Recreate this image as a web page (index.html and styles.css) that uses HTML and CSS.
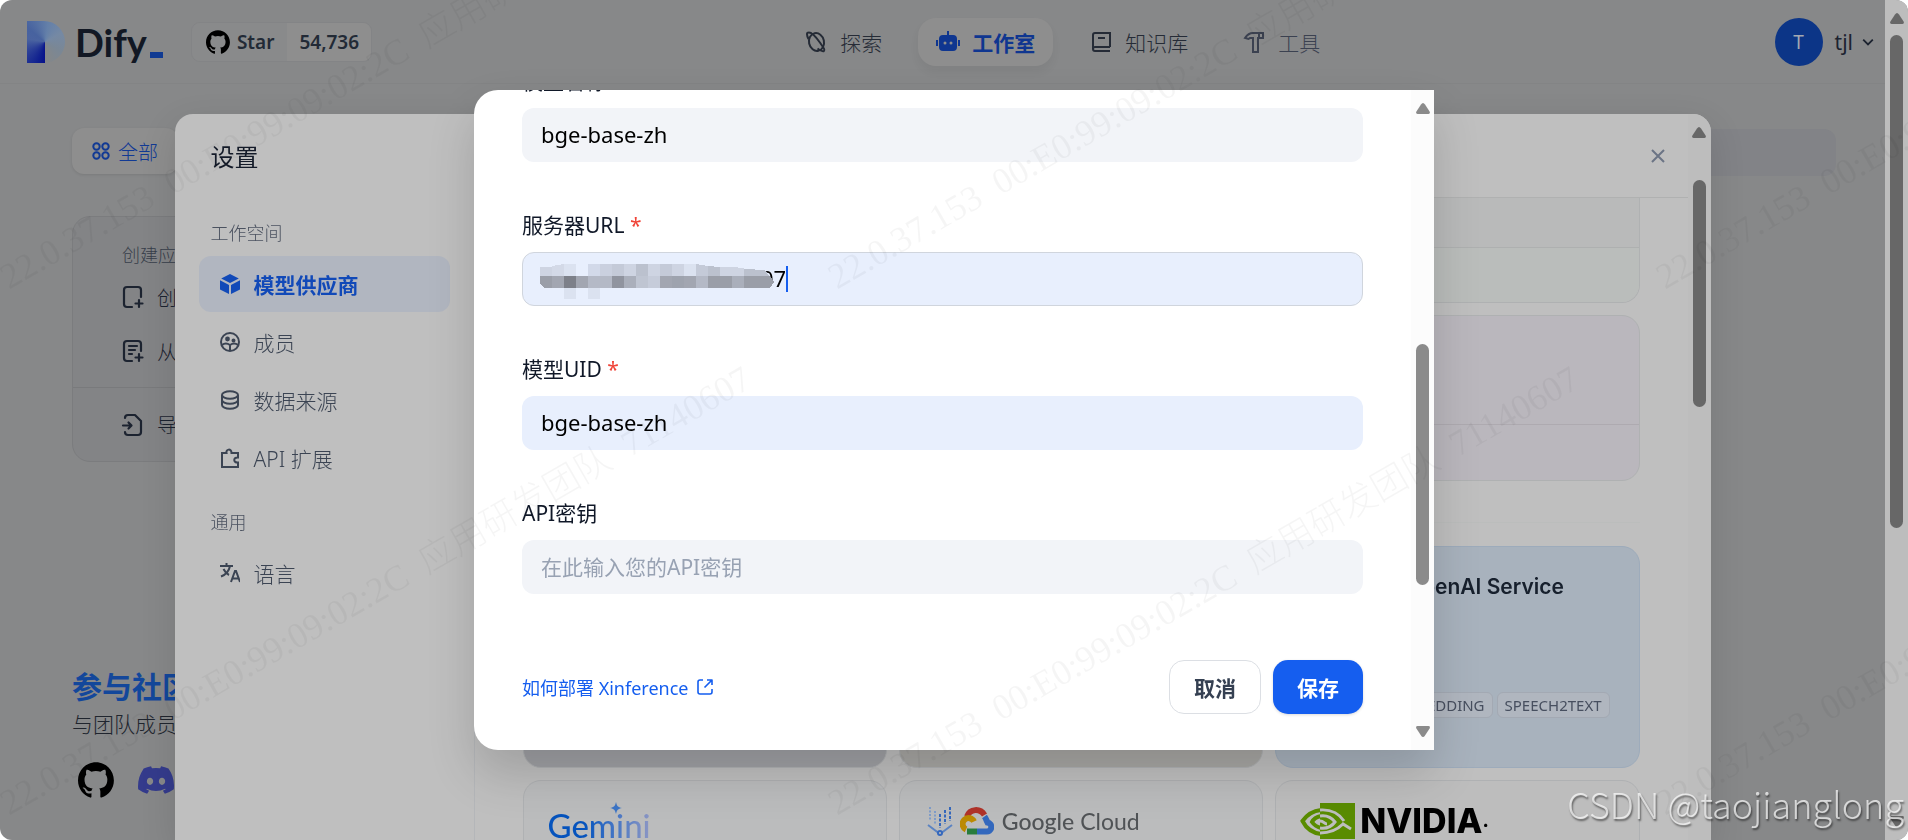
FILE: index.html
```html
<!DOCTYPE html>
<html lang="zh-CN">
<head>
<meta charset="utf-8">
<meta name="viewport" content="width=device-width, initial-scale=1">
<title>Dify</title>
<link rel="stylesheet" href="styles.css">
</head>
<body>
<svg class="defs" aria-hidden="true">
  <defs>
    <symbol id="github" viewBox="0 0 98 96"><path fill-rule="evenodd" d="M48.9 0C21.8 0 0 22 0 49.2 0 71 14 89.400 33.400 95.900c2.400.5 3.300-1.100 3.300-2.400 0-1.100-.1-5.100-.1-9.200-13.600 2.900-16.400-5.900-16.400-5.900-2.200-5.700-5.400-7.200-5.400-7.200-4.500-3 .3-3 .3-3 4.900.3 7.500 5.100 7.500 5.100 4.400 7.500 11.400 5.400 14.200 4.100.4-3.200 1.700-5.400 3.100-6.600-10.800-1.100-22.200-5.400-22.200-24.300 0-5.400 2-9.800 5-13.200-.5-1.200-2.200-6.300.5-13 0 0 4.100-1.300 13.400 5a46.900 46.900 0 0 1 24.400 0c9.300-6.300 13.400-5 13.400-5 2.700 6.700 1 11.800.5 13 3.200 3.400 5 7.800 5 13.200 0 18.900-11.400 23.100-22.300 24.300 1.800 1.500 3.300 4.500 3.300 9.100 0 6.600-.1 11.900-.1 13.500 0 1.300.9 2.900 3.300 2.400C83.600 89.400 97.700 71 97.700 49.200 97.700 22 75.800 0 48.900 0z"/></symbol>
    <symbol id="up" viewBox="0 0 14 11"><path d="M7 0Q8 0 9 1.500L13.600 8.500Q14.600 11 12.500 11H1.500Q-.6 11 .4 8.500L5 1.500Q6 0 7 0z"/></symbol>
    <symbol id="down" viewBox="0 0 14 11"><path d="M7 11Q8 11 9 9.500L13.600 2.500Q14.600 0 12.500 0H1.500Q-.6 0 .4 2.500L5 9.500Q6 11 7 11z"/></symbol>
  </defs>
</svg>

<div class="app">
  <div class="page">
    <header class="topbar">
      <div class="brand">
        <a class="logo" href="#" aria-label="Dify">
          <span class="logo-mark"></span><span class="logo-text">Dify</span><span class="logo-dash"></span>
        </a>
        <a class="star" href="#"><span class="star-label"><svg class="i24"><use href="#github"/></svg>Star</span><span class="star-count">54,736</span></a>
      </div>
      <nav class="nav">
        <a href="#"><svg class="i24" viewBox="0 0 24 24" fill="none" stroke="currentColor" stroke-width="2"><ellipse cx="12.500" cy="12" rx="7.500" ry="9" transform="rotate(-12 12.500 12)"/><path d="M4.500 9C2.500 5 2.500 2.500 4.500 2.500c3-.3 7.500 4.500 11 9.500S21.500 20 20 21c-1.500.8-4-.5-6.500-2.500"/></svg>探索</a>
        <a class="active" href="#"><svg class="i24" viewBox="0 0 24 24" fill="currentColor"><path fill-rule="evenodd" d="M11 1h2v4h4a4 4 0 0 1 4 4v8a4 4 0 0 1-4 4H7a4 4 0 0 1-4-4V9a4 4 0 0 1 4-4h4zM9 11.500a1.500 1.500 0 1 0 0 3 1.500 1.500 0 0 0 0-3zm6 0a1.500 1.500 0 1 0 0 3 1.500 1.500 0 0 0 0-3zM0 10h2v6H0zm22 0h2v6h-2z"/></svg>工作室</a>
        <a href="#"><svg class="i24" viewBox="0 0 24 24" fill="none" stroke="currentColor" stroke-width="2"><path d="M21 17V3H6a2 2 0 0 0-2 2v14a2 2 0 0 0 2 2h15M4 19a2 2 0 0 1 2-2h15M9 8h7"/></svg>知识库</a>
        <a class="soft" href="#"><svg class="i24" viewBox="0 0 24 24" fill="none" stroke="currentColor" stroke-width="2"><path d="M3 8C5 5 8 3 11 3h10v5h-5v14h-5V8H8L6.500 9zM17 3v5"/></svg>工具</a>
      </nav>
      <button class="account" type="button"><span class="avatar">T</span>tjl<svg class="i10" viewBox="0 0 10 10" fill="none" stroke="currentColor" stroke-width="1.500"><path d="M1 3l4 4 4-4"/></svg></button>
    </header>

    <div class="filters">
      <button class="filter" type="button"><svg class="i18" viewBox="0 0 18 18" fill="none" stroke="currentColor" stroke-width="2"><circle cx="4.500" cy="4.500" r="3.200"/><circle cx="13.500" cy="4.500" r="3.200"/><circle cx="4.500" cy="13.500" r="3.200"/><circle cx="13.500" cy="13.500" r="3.200"/></svg>全部</button>
      <input class="search" type="search" aria-label="搜索">
    </div>

    <section class="create">
      <h2>创建应用</h2>
      <a href="#"><svg class="i24" viewBox="0 0 24 24" fill="none" stroke="currentColor" stroke-width="2.200" stroke-linecap="round"><path d="M20 12V5a3 3 0 0 0-3-3H6a3 3 0 0 0-3 3v14a3 3 0 0 0 3 3h5M18 15v7M14.500 18.500h7"/></svg>创建空白应用</a>
      <a href="#"><svg class="i24" viewBox="0 0 24 24" fill="none" stroke="currentColor" stroke-width="2.200" stroke-linecap="round"><path d="M20 12V5a3 3 0 0 0-3-3H6a3 3 0 0 0-3 3v14a3 3 0 0 0 3 3h5M18 15v7M14.500 18.500h7M8 7h8M8 11h6M8 15h3"/></svg>从应用模板创建</a>
      <a class="import" href="#"><svg class="i24" viewBox="0 0 24 24" fill="none" stroke="currentColor" stroke-width="2.200" stroke-linecap="round" stroke-linejoin="round"><path d="M4 5a3 3 0 0 1 3-3h7l6 6v11a3 3 0 0 1-3 3H7a3 3 0 0 1-3-3M2 12.500h8M7.500 9.500l3 3-3 3"/></svg>导入 DSL 文件</a>
    </section>

    <footer class="community">
      <h2>参与社区</h2>
      <p>与团队成员、贡献者和开发者在不同频道中交流</p>
      <div class="social">
        <a href="#" aria-label="GitHub"><svg class="i36"><use href="#github"/></svg></a>
        <a class="discord" href="#" aria-label="Discord"><svg class="i36" viewBox="0 0 24 24"><path fill="currentColor" d="M20.300 4.400A19.800 19.800 0 0 0 15.400 2.900l-.6 1.300a18.300 18.300 0 0 0-5.500 0l-.6-1.300c-1.700.3-3.400.8-4.900 1.500C.6 9 -.3 13.600.1 18.100a20 20 0 0 0 6 3l1.300-2a13 13 0 0 1-1.900-.9l.4-.3a14.200 14.200 0 0 0 12.200 0l.4.3c-.6.4-1.300.7-1.900.9l1.300 2a19.900 19.900 0 0 0 6-3c.5-5.200-.8-9.700-3.600-13.700zM8 15.300c-1.200 0-2.100-1.100-2.100-2.400S6.800 10.500 8 10.500s2.200 1.100 2.100 2.400c0 1.300-.9 2.400-2.100 2.400zm8 0c-1.200 0-2.100-1.100-2.100-2.400s.9-2.400 2.100-2.400 2.200 1.100 2.100 2.400c0 1.300-.9 2.400-2.100 2.400z"/></svg></a>
      </div>
    </footer>
  </div>
  <div class="bar bar-page"><svg class="arrow"><use href="#up"/></svg><div class="track"><div class="thumb"></div></div><svg class="arrow"><use href="#down"/></svg></div>
</div>

<div class="layer layer-settings">
  <section class="settings" role="dialog" aria-label="设置">
    <aside class="side">
      <h1>设置</h1>
      <h2>工作空间</h2>
      <ul>
        <li><a class="on" href="#"><svg class="i20" viewBox="0 0 20 20" fill="currentColor"><path d="M10 0l8.800 4.500L10 9 1.200 4.500zM0 6.300l9 4.700v9L0 15.500zM20 6.300V15.500L11 20v-9z"/></svg>模型供应商</a></li>
        <li><a href="#"><svg class="i20" viewBox="0 0 20 20" fill="none" stroke="currentColor" stroke-width="2"><circle cx="10" cy="10" r="9"/><path d="M2 13c3-2.500 6-1.500 8 0 2-1.500 5-2.500 8 0M10 12v7"/><circle cx="7.500" cy="7" r="1.400" fill="currentColor"/><circle cx="13.500" cy="8.500" r="1" fill="currentColor"/></svg>成员</a></li>
        <li><a href="#"><svg class="i20" viewBox="0 0 20 20" fill="none" stroke="currentColor" stroke-width="2"><ellipse cx="10" cy="5" rx="8" ry="3.700"/><path d="M2 5v10c0 2 3.500 3.700 8 3.700s8-1.700 8-3.700V5M2 10c0 2 3.500 3.700 8 3.700s8-1.700 8-3.700"/></svg>数据来源</a></li>
        <li><a href="#"><svg class="i20" viewBox="0 0 20 20" fill="none" stroke="currentColor" stroke-width="2"><path d="M2 5h4.500C5.500 1 11.500 0 11.500 5H18v4.500c-5-.5-5 5.500 0 5V19H2z"/></svg>API 扩展</a></li>
      </ul>
      <h2>通用</h2>
      <ul>
        <li><a href="#"><svg class="i20" viewBox="0 0 20 20" fill="none" stroke="currentColor" stroke-width="2"><path d="M0 3h13M6.500 0v3M10 3c-1 5-5 9-9 10.500M3.500 6C5 9 7 11 9 12"/><path d="M11 19l4-11h1l4 11M12.500 15.500h6"/></svg>语言</a></li>
      </ul>
    </aside>
    <div class="content">
      <div class="content-head"><button type="button" aria-label="关闭"><svg class="i18" viewBox="0 0 18 18" fill="none" stroke="currentColor" stroke-width="2"><path d="M3 3l12 12M15 3L3 15"/></svg></button></div>
      <div class="content-body">
        <div class="wide wide-a"><div class="top"></div><div class="rest"></div></div>
        <div class="wide wide-b"><div class="top"></div><div class="rest"></div></div>
        <hr>
        <div class="cards">
          <article class="card grey"></article>
          <article class="card sand"></article>
          <article class="card blue">
            <div class="azure"><svg viewBox="0 0 36 36"><path fill="#0a5a9c" d="M13 3h10l10 30H23L17 15l-5 18H2z"/></svg>Azure OpenAI Service</div>
            <div class="tags"><span>LLM</span><span>TEXT EMBEDDING</span><span>SPEECH2TEXT</span></div>
          </article>
          <article class="card">
            <div class="gemini"><span>Gemini</span><svg viewBox="0 0 12 12"><path fill="#3b74c6" d="M6 0c.8 4 2 5.200 6 6-4 .8-5.200 2-6 6-.8-4-2-5.200-6-6 4-.8 5.200-2 6-6z"/></svg></div>
          </article>
          <article class="card">
            <div class="gcloud">
              <svg class="vertex" viewBox="0 0 26 30" fill="none" stroke="#3568bd" stroke-width="2"><path d="M1 19l12 9 12-9" stroke="#5b83c2"/><circle cx="13" cy="27" r="2" fill="#bdbebe"/><path stroke-dasharray="2 1.500" d="M3 1v14M8 5v13" stroke="#7f9cc9"/><path stroke-dasharray="3 1.500" d="M13 8v14M18 4v14M23 1v14"/></svg>
              <svg class="cloud" viewBox="0 0 34 28" fill="none" stroke-width="6"><path stroke="#287c3c" d="M7 24.500h10"/><path stroke="#3368bd" d="M17 24.500h9a4.500 4.500 0 0 0 1.500-9c-1-2-1.500-4-3-6"/><path stroke="#b0332a" d="M7 9.500C10 1.500 20 1 24.500 8"/><path stroke="#bb8a02" d="M14 14.500a6 6 0 1 0-8 8"/></svg>
              <span><b>Google</b> Cloud</span>
            </div>
          </article>
          <article class="card plain">
            <div class="nvidia"><svg viewBox="0 0 55 36"><path fill="#598c00" d="M20 0h35v36H20z"/><path fill="none" stroke="#598c00" stroke-width="4" d="M21 7C12 8 6 13 2.500 18 6 25 13 30 21 31M21 13c-5 1-8 4-9 6 2 3 5 5 9 6"/><path fill="none" stroke="#bdbebe" stroke-width="3" d="M20 7c12-1 20 5 24 11M20 30c9 0 17-3 23-9l8 5M20 13c7-1 12 2 15 6-3 4-8 7-15 6M20 18c4 0 4 3 7 3"/></svg><span>NVIDIA</span><small>.</small></div>
          </article>
        </div>
      </div>
    </div>
    <div class="bar bar-settings"><svg class="arrow"><use href="#up"/></svg><div class="track"><div class="thumb"></div></div></div>
  </section>
</div>

<div class="layer layer-form">
  <section class="dialog" role="dialog" aria-label="Xinference">
    <form class="form">
      <div class="field"><label for="name">模型名称 <em>*</em></label><input id="name" type="text" value="bge-base-zh"></div>
      <div class="field"><label for="url">服务器URL <em>*</em></label>
        <div class="url-box"><input id="url" class="url" type="text" value="07">
          <svg class="mosaic" viewBox="0 0 234 36" shape-rendering="crispEdges"><g fill="#ced4e2"><path d="M0 3h12v9H0z"/><path fill="#d3d9e7" d="M12 2l12-2v12H12z"/><path fill="#dbe2f0" d="M24 0h12v12H24zM24 24h12v11H24zM48 24h12v11H48zM144 0h12v12h-12z"/><path fill="#d2d9e9" d="M48 0h12v12H48z"/><path fill="#cad0df" d="M60 0h12v12H60z"/><path fill="#c4cad8" d="M72 0h12v12H72zM120 0h12v12h-12zM156 0l12 2v10h-12z"/><path d="M84 0h12v12H84zM108 0h12v12h-12zM132 0h12v12h-12zM180 3h12v9h-12zM192 3l12 1v8h-12z"/><path fill="#bbc1ce" d="M96 0h12v12H96zM168 2l12 1v9h-12zM204 5l21 1 4 6h-25z"/></g>
          <path fill="#9a9ea8" d="M0 12h12v12H4l-4-4zM168 12h24v12h-24zM204 12h26l4 6-4 6h-26z"/><path fill="#a2a6b1" d="M12 12h12v12H12zM36 12h12v12H36zM120 12h12v12h-12zM144 12h12v12h-12z"/><path fill="#7d8089" d="M24 12h12v12H24z"/><path fill="#b4b9c6" d="M48 12h24v12H48zM156 12h12v12h-12z"/><path fill="#90949f" d="M72 12h12v12H72z"/><path fill="#aaafbb" d="M84 12h12v12H84zM192 12h12v12h-12z"/><path fill="#bfc5d2" d="M96 12h12v12H96z"/><path fill="#c6ccda" d="M108 12h12v12h-12z"/><path fill="#9ea3ae" d="M132 12h12v12h-12z"/></svg>
          <span class="caret"></span></div></div>
      <div class="field"><label for="uid">模型UID <em>*</em></label><input id="uid" class="filled" type="text" value="bge-base-zh"></div>
      <div class="field"><label for="key">API密钥</label><input id="key" type="text" placeholder="在此输入您的API密钥"></div>
      <div class="actions">
        <a href="#">如何部署 Xinference<svg class="i18" viewBox="0 0 18 18" fill="none" stroke="currentColor" stroke-width="1.600" stroke-linejoin="round"><path d="M7 2H4a2 2 0 0 0-2 2v10a2 2 0 0 0 2 2h10a2 2 0 0 0 2-2v-3M11 2h5v5M16 2L8.500 9.500"/></svg></a>
        <button class="cancel" type="button">取消</button>
        <button class="save" type="button">保存</button>
      </div>
    </form>
    <div class="bar bar-form"><svg class="arrow"><use href="#up"/></svg><div class="track"><div class="thumb"></div></div><svg class="arrow"><use href="#down"/></svg></div>
  </section>
</div>

<div class="marks" aria-hidden="true">
  <span class="c1 r1">22.0.37.153  00:E0:99:09:02:2C  应用研发团队  71140607</span>
  <span class="c2 r1">22.0.37.153  00:E0:99:09:02:2C  应用研发团队  71140607</span>
  <span class="c3 r1">22.0.37.153  00:E0:99:09:02:2C  应用研发团队  71140607</span>
  <span class="c1 r2">22.0.37.153  00:E0:99:09:02:2C  应用研发团队  71140607</span>
  <span class="c2 r2">22.0.37.153  00:E0:99:09:02:2C  应用研发团队  71140607</span>
  <span class="c3 r2">22.0.37.153  00:E0:99:09:02:2C  应用研发团队  71140607</span>
</div>
<div class="credit">CSDN @taojianglong</div>
</body>
</html>
```
FILE: styles.css
```css
* { box-sizing: border-box; }
html, body { height: 100%; margin: 0; overflow: hidden; background: #fff; }
body, button, input {
  font-family: "Noto Sans", "Noto Sans CJK SC", sans-serif;
  font-size: 21px;
  font-weight: 300;
}
body { color: #1c2330; }
h1, h2, p, ul { margin: 0; padding: 0; font-weight: inherit; }
ul { list-style: none; }
a { color: inherit; text-decoration: none; }
button { border: 0; background: none; padding: 0; color: inherit; }
svg { flex: none; }
.defs { position: absolute; width: 0; height: 0; }
.i10 { width: 12px; height: 12px; }
.i18 { width: 18px; height: 18px; }
.i20 { width: 20px; height: 20px; }
.i24 { width: 24px; height: 24px; }
.i36 { width: 36px; height: 36px; display: block; }

/* page */
.app { display: flex; height: 100%; border-radius: 12px; overflow: hidden; background: #878889; }
.page { flex: 1; min-width: 0; display: flex; flex-direction: column; }
.topbar { display: flex; align-items: center; justify-content: space-between; height: 84px; padding: 0 11px 0 27px; border-bottom: 1px solid #838485; }
.brand { display: flex; align-items: center; gap: 28px; }
.logo { display: flex; align-items: center; height: 42px; }
.logo-mark { width: 38px; height: 42px; margin-right: 10px; border-radius: 0 21px 21px 0; background: conic-gradient(from 180deg at 18px 21px, #07118a 0deg, #10208f 20deg, #2b3f97 60deg, #4a63a0 100deg, #47629f 130deg, #6480a9 190deg, #7589a4 240deg, #7a8795 300deg, #858788 360deg); }
.logo-text { font: 700 38px/42px Lato, sans-serif; color: #121824; }
.logo-dash { align-self: flex-end; width: 13px; height: 6px; margin: 0 0 5px 3px; background: #103a92; }
.star { display: flex; height: 40px; border: 1px solid #838486; border-radius: 9px; overflow: hidden; font-size: 19px; font-weight: 600; color: #222a36; }
.star span { display: flex; align-items: center; }
.star-label { gap: 7px; padding: 0 13px 0 14px; background: #898a8b; }
.star-count { padding: 0 12px; background: #8e8e8e; }
.nav { display: flex; gap: 18px; color: #252b36; }
.nav a { display: flex; align-items: center; gap: 12px; height: 48px; padding: 0 18px; border-radius: 18px; }
.nav .active { background: #8e8e8e; color: #0f3690; font-weight: 700; box-shadow: 0 6px 10px rgba(0,0,0,.05); }
.nav .soft { color: #3b4150; }
.account { display: flex; align-items: center; padding-left: 22px; font-weight: 400; }
.account .i10 { margin-left: 9px; }
.avatar { width: 48px; height: 48px; margin-right: 12px; border-radius: 50%; background: #0c3587; color: #a3a8b2; line-height: 48px; font-size: 19px; }
.filters { display: flex; justify-content: space-between; align-items: center; padding: 42px 49px 0 72px; }
.filter { display: flex; align-items: center; gap: 8px; height: 46px; padding: 0 20px; border-radius: 12px; background: #8e8e8e; color: #123a94; font-size: 20px; box-shadow: 0 1px 3px rgba(0,0,0,.1); }
.search { width: 300px; height: 47px; margin: 3px 0 0; border: 0; border-radius: 12px; background: #828387; }
.create { width: 430px; margin: 40px 0 0 72px; padding: 23px 0 0; border: 1px solid #7b7c7e; border-radius: 18px; background: #838486; font-size: 20px; }
.create h2 { padding-left: 49px; font-size: 18px; line-height: 30px; color: #373e4a; }
.create a { display: flex; align-items: center; gap: 12px; height: 54px; padding-left: 48px; }
.create .import { height: 74px; margin-top: 9px; border-top: 1px solid #797a7c; }
.community { margin: auto 0 42px 72px; }
.community h2 { font-size: 30px; line-height: 42px; font-weight: 700; color: #13479b; }
.community p { font-size: 21px; line-height: 33px; color: #20252e; white-space: nowrap; }
.social { display: flex; gap: 24px; padding: 21px 6px 0; color: #0c0c0c; }
.discord { color: #343b8c; }

/* scroll bars */
.bar { display: flex; flex-direction: column; align-items: center; width: 23px; padding: 13px 0; background: #bdbdbd; color: #676767; }
.arrow { width: 14px; height: 11px; fill: currentColor; }
.track { flex: 1; width: 13px; padding: 11px 0; }
.thumb { border-radius: 7px; background: currentColor; }
.bar-page .thumb { height: 64%; }

/* settings */
.layer { position: fixed; inset: 0; display: flex; justify-content: center; }
.layer-settings { padding: 114px 23px 0 0; overflow: hidden; }
.settings { display: flex; width: 1536px; max-width: 92%; border-radius: 18px 18px 0 0; overflow: hidden; background: #bfbfbf; box-shadow: 0 12px 36px rgba(0,0,0,.12); }
.side { width: 300px; padding: 23px 24px 0; border-right: 1px solid #b4b6b9; color: #3b4453; }
.side h1 { padding-left: 12px; font-size: 24px; font-weight: 400; line-height: 39px; color: #141b29; }
.side h2 { padding-left: 12px; font-size: 18px; line-height: 30px; color: #4b5260; }
.side h1 + h2 { margin-top: 42px; }
.side ul { display: grid; gap: 2px; padding: 8px 0 6px; }
.side ul + h2 { margin-top: 15px; }
.side a { display: flex; align-items: center; gap: 14px; height: 56px; padding-left: 21px; border-radius: 12px; }
.side .on { background: #b1b6c0; color: #1149b8; font-weight: 700; }
.content { flex: 1; min-width: 0; display: flex; flex-direction: column; }
.content-head { display: flex; align-items: center; justify-content: flex-end; flex: none; height: 84px; padding-right: 21px; border-bottom: 1px solid #b0b1b1; color: #6b7485; }
.content-head svg { display: block; }
.content-body { flex: 1; min-height: 0; padding: 0 48px; overflow: hidden; }
.wide { margin-bottom: 12px; border: 1px solid #afb1b2; border-radius: 18px; overflow: hidden; }
.wide-a { border-top: 0; border-radius: 0 0 18px 18px; }
.wide-a .top { height: 50px; background: #b9baba; border-bottom: 1px solid #aeb0b0; }
.wide-a .rest { height: 54px; background: #babdbb; }
.wide-b { background: #bab7bd; }
.wide-b .top { height: 109px; border-bottom: 1px solid #aeaab0; }
.wide-b .rest { height: 55px; }
hr { margin: 41px 0 23px; border: 0; border-top: 1px solid #bbbdbc; }
.cards { display: grid; grid-template-columns: repeat(3, 1fr); grid-auto-rows: 222px; gap: 12px; }
.card { display: flex; flex-direction: column; justify-content: space-between; padding: 21px 24px 49px; border: 1px solid #afb1b3; border-radius: 18px; background: #bbbcbd; }
.plain { background: #bdbdbd; }
.grey { background: #a0a1a5; }
.sand { background: #a8a7a4; }
.blue { background: #a8b2bd; border-color: #9dabbb; }
.azure { display: flex; align-items: center; gap: 4px; font: 600 21px/38px Inter, sans-serif; color: #17202d; }
.azure svg { width: 36px; height: 36px; }
.tags { display: flex; gap: 4px; font-size: 15px; font-weight: 400; line-height: 24px; color: #474f5f; white-space: nowrap; }
.tags span { padding: 0 7px; border: 1px solid #a3a9b3; border-radius: 6px; background: #b0b6bf; }
.gemini { position: relative; align-self: flex-start; }
.gemini span { display: block; font: 500 33px/46px Lato, sans-serif; color: transparent; background: linear-gradient(90deg, #0553bd 35%, #3a70c4 60%, #8d97c4); background-clip: text; -webkit-background-clip: text; }
.gemini svg { position: absolute; left: 62px; top: 0; width: 12px; height: 12px; }
.gcloud { display: flex; align-items: center; height: 38px; padding-left: 3px; font: 400 23px/38px Lato, sans-serif; color: #505356; }
.gcloud b { font-weight: 500; }
.vertex { width: 26px; height: 30px; margin-right: 7px; }
.cloud { width: 34px; height: 28px; margin-right: 8px; }
.nvidia { display: flex; align-items: center; height: 38px; font: 800 34px/38px Inter, sans-serif; color: #000; }
.nvidia svg { width: 55px; height: 36px; margin-right: 5px; }
.nvidia small { align-self: flex-end; font-size: 18px; }
.bar-settings .track { padding-top: 42px; }
.bar-settings .thumb { height: 227px; }

/* form dialog */
.layer-form { align-items: center; }
.dialog { display: flex; width: 960px; max-width: 90%; height: 660px; border-radius: 24px 0 0 24px; overflow: hidden; background: #fff; box-shadow: 0 24px 48px rgba(0,0,0,.16); }
.form { flex: 1; min-width: 0; display: flex; flex-direction: column; justify-content: flex-end; gap: 48px; padding: 0 48px 36px; }
.field { display: flex; flex-direction: column; gap: 12px; }
.field label { line-height: 30px; color: #101828; font-weight: 400; }
.field em { font-style: normal; color: #f04438; }
.field input { width: 100%; height: 54px; padding: 0 18px 2px; border: 1px solid transparent; border-radius: 12px; background: #f2f4f8; color: #000; font-size: 22px; font-weight: 400; outline: 0; }
.field input::placeholder { color: #98a2b3; opacity: 1; font-size: 21px; }
.field .filled, .field .url { background: #e8effd; }
.field .url { padding-left: 238px; border-color: #d0d5dd; }
.url-box { position: relative; }
.mosaic { position: absolute; left: 18px; top: 12px; width: 234px; height: 36px; }
.caret { position: absolute; left: 264px; top: 14px; width: 2px; height: 26px; background: #155eef; }
.actions { display: flex; align-items: center; gap: 12px; padding-top: 18px; }
.actions a { display: flex; align-items: center; gap: 8px; margin-right: auto; color: #155eef; font-size: 18px; font-weight: 400; }
.actions button { height: 54px; padding: 0 24px; border-radius: 15px; font-weight: 700; }
.cancel { border: 1px solid #dcdfe4; background: #fff; color: #354052; }
.save { background: #155eef; color: #fff; box-shadow: 0 1px 3px rgba(0,0,0,.15); }
.bar-form { background: #fcfcfc; color: #8b8b8b; }
.bar-form .track { padding-top: 230px; }
.bar-form .thumb { height: 241px; }

/* watermarks */
.marks { position: fixed; inset: 0; overflow: hidden; pointer-events: none; }
.marks span { position: absolute; white-space: pre; font: 36px/36px "Liberation Serif", "Noto Sans CJK SC", serif; font-weight: 300; color: rgba(0,0,0,.04); transform: rotate(-30deg); transform-origin: 0 100%; }
.c1 { left: 12px; }
.c2 { left: 840px; }
.c3 { left: 1668px; }
.r1 { top: 259px; }
.r2 { top: 785px; }
.credit { position: fixed; right: 4px; bottom: 13px; font: 300 36px/48px "Noto Sans CJK SC", sans-serif; color: rgba(255,255,255,.7); text-shadow: 1px 2px 2px rgba(0,0,0,.5); }
```
